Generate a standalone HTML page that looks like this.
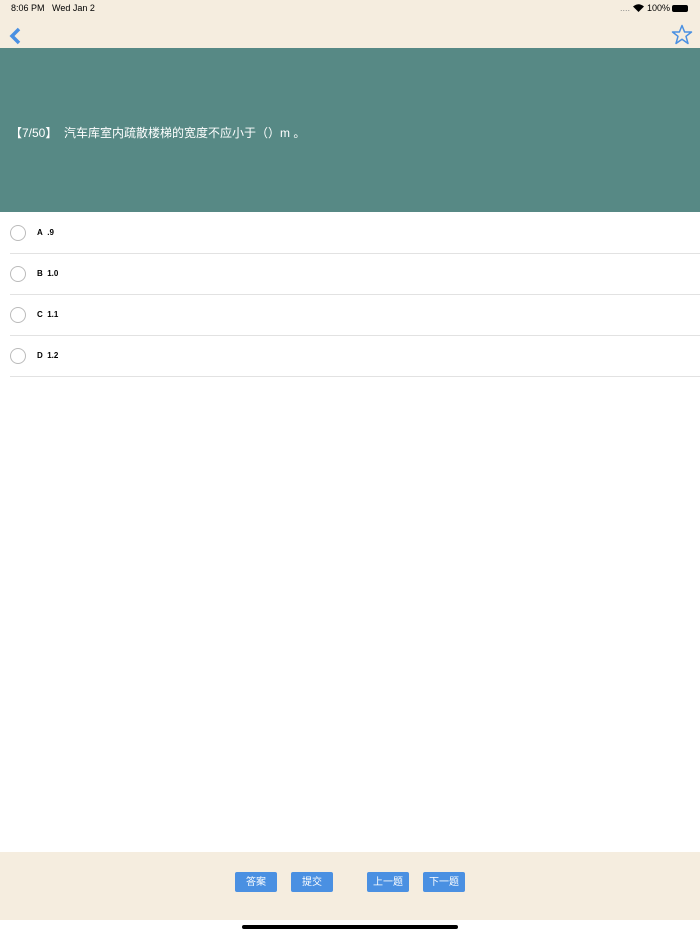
<!DOCTYPE html><html><head><meta charset="utf-8"><style>
body{margin:0;width:700px;height:934px;position:relative;background:#fff;font-family:"Liberation Sans","Noto Sans CJK SC",sans-serif;overflow:hidden}
.top{position:absolute;left:0;top:0;width:700px;height:48px;background:#f5eddf}
.st{position:absolute;top:3px;font-size:9px;color:#000}
.q{position:absolute;left:0;top:48px;width:700px;height:164px;background:#578985}
.qt{position:absolute;left:10px;top:124px;color:#fff;font-size:12px}
.opt{position:absolute;left:10px;width:690px;height:40px;border-bottom:1px solid #e2e2e2}
.c{position:absolute;left:0;top:12px;width:14px;height:14px;border:1px solid #bbb;border-radius:50%}
.ot{position:absolute;left:27px;top:15px;font-size:8px;font-weight:bold;color:#000}
.bot{position:absolute;left:0;top:852px;width:700px;height:68px;background:#f5eddf}
.b{position:absolute;top:20px;width:42px;height:20px;background:#4a90e2;color:#fff;font-size:10px;text-align:center;line-height:22px;border-radius:2px}
.home{position:absolute;left:242px;top:925px;width:216px;height:4px;background:#000;border-radius:2px}
</style></head><body>
<div class="top">
<div class="st" style="left:11px">8:06 PM&nbsp;&nbsp;&nbsp;Wed Jan 2</div>
<div class="st" style="left:620px;color:#888">....</div>
<svg style="position:absolute;left:633px;top:4px" width="11" height="8" viewBox="0 0 11 8"><path d="M5.5 8L0 2.5Q5.5-2 11 2.5Z" fill="#000"/></svg>
<div class="st" style="left:647px">100%</div>
<div style="position:absolute;left:672px;top:5px;width:14px;height:5px;border:1px solid #000;border-radius:2px;background:#000"></div>
<svg style="position:absolute;left:8px;top:27px" width="14" height="18" viewBox="0 0 14 18"><path d="M11 2L4 9L11 16" stroke="#4a90e2" stroke-width="3.5" fill="none"/></svg>
<svg style="position:absolute;left:671px;top:24px" width="22" height="21" viewBox="0 0 22 21"><path d="M11 1.5L13.6 8H20.5L15 12.3L17 19.5L11 15.3L5 19.5L7 12.3L1.5 8H8.4Z" stroke="#4a90e2" stroke-width="1.5" fill="none" stroke-linejoin="round"/></svg>
</div>
<div class="q"></div>
<div class="qt">【7/50】&nbsp;&nbsp;汽车库室内疏散楼梯的宽度不应小于（）m 。</div>
<div class="opt" style="top:213px"><div class="c"></div><div class="ot">A&nbsp;&nbsp;.9</div></div>
<div class="opt" style="top:254px"><div class="c"></div><div class="ot">B&nbsp;&nbsp;1.0</div></div>
<div class="opt" style="top:295px"><div class="c"></div><div class="ot">C&nbsp;&nbsp;1.1</div></div>
<div class="opt" style="top:336px"><div class="c"></div><div class="ot">D&nbsp;&nbsp;1.2</div></div>
<div class="bot">
<div class="b" style="left:235px">答案</div>
<div class="b" style="left:291px">提交</div>
<div class="b" style="left:367px">上一题</div>
<div class="b" style="left:423px">下一题</div>
</div>
<div class="home"></div>
</body></html>
